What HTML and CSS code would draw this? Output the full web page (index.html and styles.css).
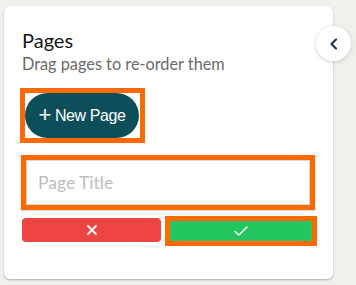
FILE: index.html
```html
<!DOCTYPE html>
<html>
<head>
<meta charset="utf-8">
<link rel="stylesheet" href="styles.css">
</head>
<body>
<div class="card">
  <h2 class="title">Pages</h2>
  <p class="subtitle">Drag pages to re-order them</p>
  <div class="hl hl-new">
    <button class="btn-new"><span class="plus">+</span><span>New Page</span></button>
  </div>
  <div class="hl hl-input">
    <input class="input" type="text" placeholder="Page Title">
  </div>
  <div class="actions">
    <button class="btn-cancel" aria-label="Cancel">
      <svg width="12" height="12" viewBox="0 0 12 12"><path d="M2 2L10 10M10 2L2 10" stroke="#fff" stroke-width="1.8" stroke-linecap="round"/></svg>
    </button>
    <div class="hl-ok">
      <button class="btn-ok" aria-label="Confirm">
        <svg width="16" height="12" viewBox="0 0 16 12"><path d="M2 6.5L6 10L14 2" fill="none" stroke="#fff" stroke-width="1.6" stroke-linecap="round" stroke-linejoin="round"/></svg>
      </button>
    </div>
  </div>
  <button class="collapse" aria-label="Collapse">
    <svg width="10" height="12" viewBox="0 0 10 12"><path d="M7 1.5L2.5 6L7 10.5" fill="none" stroke="#2d3748" stroke-width="2.2" stroke-linecap="round" stroke-linejoin="round"/></svg>
  </button>
</div>
</body>
</html>
```
FILE: styles.css
```css
* { box-sizing: border-box; }
html, body { margin: 0; padding: 0; }
body {
  background: #f1f0ec;
  width: 356px;
  height: 285px;
  overflow: hidden;
  font-family: Lato, "Noto Sans", sans-serif;
}
.card {
  position: relative;
  margin: 6px 0 0 4px;
  width: 329px;
  height: 273px;
  background: #fff;
  border-radius: 6px;
  box-shadow: 0 1px 2px rgba(0,0,0,0.3);
  padding: 22px 16px 0 16px;
  display: flex;
  flex-direction: column;
}
.title {
  margin: 0 0 0 2px;
  font-size: 20px;
  line-height: 24px;
  font-weight: 400;
  color: #161616;
}
.subtitle {
  margin: 2px 0 0 2px;
  font-size: 16.3px;
  line-height: 20px;
  color: #6b6b6b;
  white-space: nowrap;
}
.hl {
  border: 5px solid #ff6a00;
}
.hl-new {
  margin-top: 14px;
  width: 125px;
  height: 55px;
  padding: 0;
}
.btn-new {
  width: 114px;
  height: 45px;
  border: none;
  border-radius: 23px;
  background: #0c4f5b;
  color: #fff;
  font-family: "Liberation Sans", Arial, sans-serif;
  font-size: 16px;
  letter-spacing: -0.4px;
  padding: 0;
  display: flex;
  align-items: center;
  justify-content: center;
  gap: 4px;
}
.plus {
  font-size: 22px;
  font-weight: 300;
  line-height: 1;
  margin-top: -2px;
}
.hl-input {
  margin-top: 12px;
  margin-left: 1px;
  width: 294px;
  height: 55px;
  box-shadow: 0 1px 2px rgba(0,0,0,0.2);
}
.input {
  width: 100%;
  height: 100%;
  border: none;
  outline: none;
  padding: 0 0 0 12px;
  font-family: Lato, sans-serif;
  font-size: 17.5px;
  color: #333;
  box-shadow: inset 0 0 0 1px #d8d8d8;
}
.input::placeholder { color: #bdbdbd; }
.actions {
  margin-top: 6px;
  display: flex;
  align-items: flex-start;
  gap: 4px;
  margin-left: 2px;
}
.btn-cancel {
  margin-top: 2px;
  width: 141px;
  height: 24px;
  border: none;
  border-radius: 4px;
  background: #ef4444;
  display: flex;
  align-items: center;
  justify-content: center;
  padding: 0;
}
.hl-ok {
  width: 154px;
  height: 30px;
  border: 5px solid #ff6a00;
  background: #fff;
}
.btn-ok {
  width: 100%;
  height: 100%;
  border: none;
  border-radius: 0;
  background: #22c55e;
  display: flex;
  align-items: center;
  justify-content: center;
  padding: 0;
  box-shadow: inset 0 0 0 1px #3bbf6a;
}
.collapse {
  position: absolute;
  top: 20px;
  right: -18px;
  width: 35px;
  height: 35px;
  border-radius: 50%;
  border: none;
  background: #fff;
  box-shadow: 0 1px 4px rgba(0,0,0,0.18);
  display: flex;
  align-items: center;
  justify-content: center;
  padding: 0;
}
```
